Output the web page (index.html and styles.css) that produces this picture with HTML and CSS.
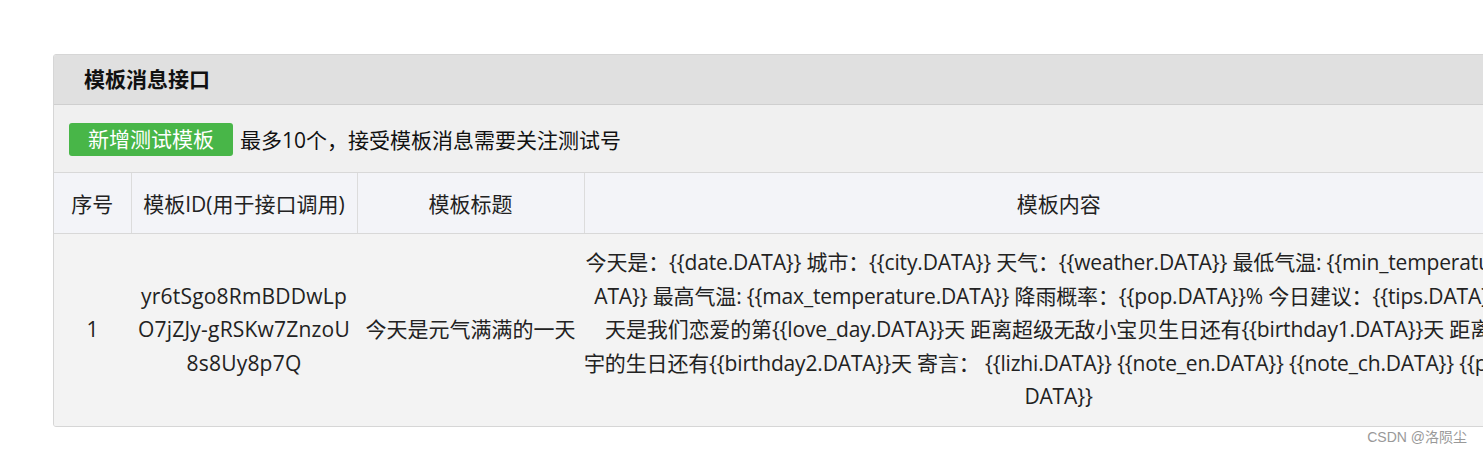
FILE: index.html
```html
<!DOCTYPE html>
<html lang="zh-CN">
<head>
<meta charset="utf-8">
<title>模板消息接口</title>
<link rel="stylesheet" href="styles.css">
</head>
<body>
<div class="page">
  <div class="panel">
    <div class="panel-head">模板消息接口</div>
    <div class="toolbar">
      <span class="btn">新增测试模板</span>
      <span class="tip">最多10个，接受模板消息需要关注测试号</span>
    </div>
    <table class="tbl">
      <colgroup>
        <col class="c1"><col class="c2"><col class="c3"><col class="c4">
      </colgroup>
      <thead>
        <tr><th>序号</th><th>模板ID(用于接口调用)</th><th>模板标题</th><th>模板内容</th></tr>
      </thead>
      <tbody>
        <tr>
          <td>1</td>
          <td class="tid"><span class="ln">yr6tSgo8RmBDDwLp</span><span class="ln">O7jZJy-gRSKw7ZnzoU</span><span class="ln">8s8Uy8p7Q</span></td>
          <td>今天是元气满满的一天</td>
          <td class="content"><span class="ln">今天是：{{date.DATA}} 城市：{{city.DATA}} 天气：{{weather.DATA}} 最低气温: {{min_temperature.D</span><span class="ln">ATA}} 最高气温: {{max_temperature.DATA}} 降雨概率：{{pop.DATA}}% 今日建议：{{tips.DATA}} 今</span><span class="ln">天是我们恋爱的第{{love_day.DATA}}天 距离超级无敌小宝贝生日还有{{birthday1.DATA}}天 距离宝</span><span class="ln">宇的生日还有{{birthday2.DATA}}天 寄言： {{lizhi.DATA}} {{note_en.DATA}} {{note_ch.DATA}} {{poem.</span><span class="ln">DATA}}</span></td>
        </tr>
      </tbody>
    </table>
  </div>
  <div class="mark">CSDN @洛陨尘</div>
</div>
</body>
</html>
```
FILE: styles.css
```css
html, body {
  margin: 0;
  padding: 0;
  background: #fff;
  overflow: hidden;
}
body {
  width: 1483px;
  height: 454px;
  font-family: "Open Sans", "Noto Sans CJK SC", sans-serif;
  color: #222;
}
.page {
  padding: 54px 0 0 53px;
  position: relative;
  height: 400px;
}
.panel {
  width: 1480px;
  border: 1px solid #d6d6d6;
  border-radius: 3px;
  background: #f3f3f3;
  overflow: hidden;
}
.panel-head {
  height: 49px;
  line-height: 49px;
  background: #e0e0e0;
  border-bottom: 1px solid #cfcfcf;
  padding-left: 30px;
  font-size: 21px;
  font-weight: bold;
  color: #111;
}
.toolbar {
  height: 67px;
  background: #f0f0f0;
  display: flex;
  align-items: center;
  padding-left: 15px;
  gap: 7px;
  border-bottom: 1px solid #d8d8d8;
}
.btn {
  background: #48b648;
  color: #fff;
  border-radius: 3px;
  font-size: 21px;
  height: 33px;
  line-height: 33px;
  padding: 0 19px;
  margin-top: 1px;
}
.tip {
  font-size: 21px;
  color: #111;
}
.tbl {
  border-collapse: collapse;
  table-layout: fixed;
  width: 1479px;
  font-size: 21px;
  color: #222;
}
.c1 { width: 77px; }
.c2 { width: 226px; }
.c3 { width: 227px; }
.c4 { width: 949px; }
.tbl th {
  background: #f3f4f8;
  font-weight: normal;
  height: 60px;
  padding: 0;
  border-right: 1px solid #dcdcdc;
  border-bottom: 1px solid #d8d8d8;
  text-align: center;
  white-space: nowrap;
}
.tbl th:last-child { border-right: none; }
.tbl td {
  background: #f3f3f3;
  text-align: center;
  vertical-align: middle;
  line-height: 33.5px;
  padding: 12px 0;
  height: 167px;
  white-space: nowrap;
}
.tbl td.tid { letter-spacing: 0.2px; }
.tbl td.content { letter-spacing: -0.15px; }
.ln { display: block; }
.mark {
  position: absolute;
  right: 16px;
  bottom: 8px;
  font-family: "Liberation Sans", "Noto Sans CJK SC", sans-serif;
  font-size: 14px;
  color: #999;
}
```
